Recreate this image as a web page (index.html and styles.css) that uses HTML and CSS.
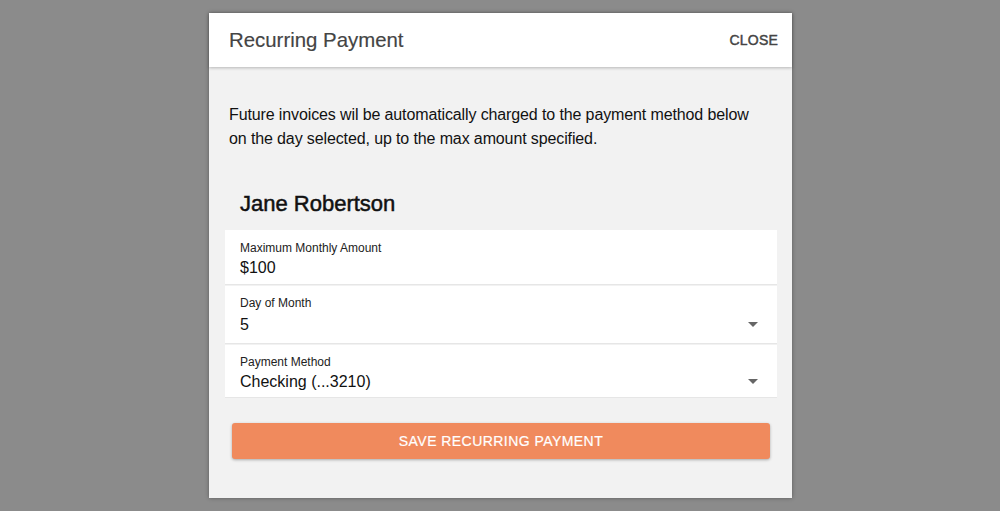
FILE: index.html
```
<!DOCTYPE html>
<html>
<head>
<meta charset="utf-8">
<link rel="stylesheet" href="styles.css">
</head>
<body>
<div class="dialog">
  <div class="header">
    <div class="title">Recurring Payment</div>
    <div class="close">CLOSE</div>
  </div>
  <div class="content">
    <p class="intro">Future invoices wil be automatically charged to the payment method below on the day selected, up to the max amount specified.</p>
    <div class="name">Jane Robertson</div>
    <div class="fields">
      <div class="field f1">
        <div class="label">Maximum Monthly Amount</div>
        <div class="value">$100</div>
      </div>
      <div class="field f2">
        <div class="label">Day of Month</div>
        <div class="value">5</div>
        <span class="arrow"></span>
      </div>
      <div class="field f3">
        <div class="label">Payment Method</div>
        <div class="value">Checking (...3210)</div>
        <span class="arrow"></span>
      </div>
    </div>
    <div class="btnwrap">
      <button class="save">SAVE RECURRING PAYMENT</button>
    </div>
  </div>
</div>
</body>
</html>
```
FILE: styles.css
```
html, body {
  margin: 0;
  padding: 0;
}
body {
  background: #8b8b8b;
  height: 511px;
  overflow: hidden;
  font-family: "Liberation Sans", Arial, sans-serif;
  padding-top: 13px;
  box-sizing: border-box;
}
.dialog {
  margin-left: 209px;
  width: 583px;
  height: 485px;
  background: #f2f2f2;
  box-shadow: 0 0 4px rgba(0,0,0,0.35);
  display: flex;
  flex-direction: column;
}
.header {
  height: 54px;
  background: #fff;
  display: flex;
  align-items: center;
  justify-content: space-between;
  padding: 0 14px 0 20px;
  box-shadow: 0 1px 3px rgba(0,0,0,0.25);
  position: relative;
  z-index: 1;
}
.title {
  font-size: 20.4px;
  color: #444;
  -webkit-text-stroke: 0.15px #444;
}
.close {
  font-size: 14px;
  color: #444;
  letter-spacing: 0.2px;
  -webkit-text-stroke: 0.45px #444;
}
.content {
  padding: 36px 15px 0 16px;
}
.intro {
  margin: 0;
  padding-left: 4px;
  padding-right: 16px;
  font-size: 16px;
  line-height: 24px;
  color: #111;
  letter-spacing: -0.12px;
}
.name {
  margin-top: 41px;
  padding-left: 15px;
  font-size: 22px;
  color: #111;
  line-height: 24px;
  height: 27px;
  -webkit-text-stroke: 0.5px #111;
}
.fields {
  margin-top: 11px;
  display: flex;
  flex-direction: column;
  gap: 1px;
}
.field {
  background: #fff;
  padding: 11px 15px 0 15px;
  border-bottom: 1px solid #e6e6e6;
  position: relative;
  box-sizing: border-box;
}
.f1 { height: 55px; }
.f2 { height: 58px; padding-top: 10px; }
.f3 { height: 53px; padding-top: 10px; }
.label {
  font-size: 12px;
  color: #222;
  line-height: 14px;
}
.value {
  margin-top: 3px;
  font-size: 16px;
  color: #111;
  line-height: 20px;
}
.f2 .value { margin-top: 5px; }
.f3 .value { margin-top: 3px; }
.arrow {
  position: absolute;
  right: 19px;
  width: 0;
  height: 0;
  border-left: 5px solid transparent;
  border-right: 5px solid transparent;
  border-top: 5px solid #666;
}
.f2 .arrow { top: 36px; }
.f3 .arrow { top: 34px; }
.btnwrap {
  padding: 25px 7px 0 7px;
}
.save {
  display: block;
  width: 100%;
  height: 36px;
  border: none;
  border-radius: 3px;
  background: #f08a5d;
  color: #fff;
  font-family: "Liberation Sans", Arial, sans-serif;
  font-size: 14px;
  letter-spacing: 0.45px;
  -webkit-text-stroke: 0.2px #fff;
  box-shadow: 0 1px 3px rgba(0,0,0,0.3);
}
```
